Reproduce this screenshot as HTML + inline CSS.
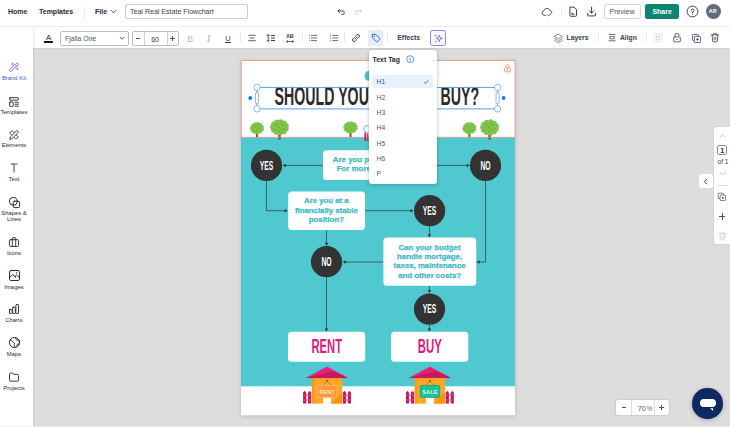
<!DOCTYPE html>
<html><head><meta charset="utf-8">
<style>
*{box-sizing:border-box;margin:0;padding:0}
html,body{width:730px;height:427px;overflow:hidden;background:#dddddd;font-family:"Liberation Sans",sans-serif;color:#1f2937}
.abs{position:absolute}
#top{position:absolute;left:0;top:0;width:730px;height:27px;background:#fff;border-bottom:1px solid #eceef1;z-index:3}
#tool{position:absolute;left:33px;top:26px;width:697px;height:22.1px;background:#fff;box-shadow:0 .5px 1.2px rgba(0,0,0,.07)}
#side{position:absolute;left:0;top:26px;width:33px;height:401px;background:#fff;box-shadow:1px 0 1.5px rgba(0,0,0,.10)}
.t{position:absolute;white-space:nowrap;line-height:1}
.b{font-weight:bold}
.vd{position:absolute;width:1px;background:#e1e4e8}
.si{position:absolute;left:-6px;width:40px;text-align:center;font-size:5.9px;line-height:6.5px;color:#2b3440}
svg{position:absolute;overflow:visible}
#tool>svg{margin-top:.9px}
</style></head><body>
<!-- CANVAS -->
<div id="canvas">
<svg style="left:0;top:0" width="730" height="427" viewBox="0 0 730 427">
<defs><filter id="ps" x="-5%" y="-5%" width="110%" height="110%"><feDropShadow dx="0" dy="1.2" stdDeviation="2.2" flood-color="#000" flood-opacity=".17"/></filter><clipPath id="pc"><rect x="241" y="60" width="274" height="355.1"/></clipPath></defs>
<rect x="241" y="60" width="274" height="355.1" fill="#fff" filter="url(#ps)"/>
<g clip-path="url(#pc)">
<rect x="241" y="137.3" width="274" height="249" fill="#4fc8d0"/>
<path d="M256.15 131.20 H257.85 L258.06 137.40 H255.94 Z" fill="#87543f"/><ellipse cx="257.00" cy="128.20" rx="5.82" ry="4.92" fill="#80c44b"/><circle cx="261.88" cy="129.44" r="1.98" fill="#80c44b"/><circle cx="260.29" cy="131.41" r="1.98" fill="#80c44b"/><circle cx="257.65" cy="132.37" r="1.98" fill="#80c44b"/><circle cx="254.81" cy="131.99" r="1.98" fill="#80c44b"/><circle cx="252.66" cy="130.42" r="1.98" fill="#80c44b"/><circle cx="251.89" cy="128.14" r="1.98" fill="#80c44b"/><circle cx="252.74" cy="125.88" r="1.98" fill="#80c44b"/><circle cx="254.94" cy="124.35" r="1.98" fill="#80c44b"/><circle cx="257.80" cy="124.05" r="1.98" fill="#80c44b"/><circle cx="260.40" cy="125.07" r="1.98" fill="#80c44b"/><circle cx="261.93" cy="127.07" r="1.98" fill="#80c44b"/><path d="M253.75 126.74 L255.28 125.46" stroke="#5fa83a" stroke-width="0.64" stroke-linecap="round"/><path d="M258.37 125.16 L259.89 126.44" stroke="#5fa83a" stroke-width="0.64" stroke-linecap="round"/><path d="M255.88 127.56 L257.41 128.84" stroke="#5fa83a" stroke-width="0.64" stroke-linecap="round"/><path d="M253.04 129.66 L254.57 130.94" stroke="#5fa83a" stroke-width="0.64" stroke-linecap="round"/><path d="M259.08 130.64 L260.60 129.36" stroke="#5fa83a" stroke-width="0.64" stroke-linecap="round"/><path d="M256.24 131.84 L257.76 130.56" stroke="#5fa83a" stroke-width="0.64" stroke-linecap="round"/>
<path d="M278.35 131.15 H280.65 L280.94 139.60 H278.06 Z" fill="#87543f"/><ellipse cx="279.50" cy="127.20" rx="7.87" ry="6.48" fill="#80c44b"/><circle cx="286.10" cy="128.83" r="2.61" fill="#80c44b"/><circle cx="283.95" cy="131.43" r="2.61" fill="#80c44b"/><circle cx="280.39" cy="132.68" r="2.61" fill="#80c44b"/><circle cx="276.54" cy="132.20" r="2.61" fill="#80c44b"/><circle cx="273.63" cy="130.12" r="2.61" fill="#80c44b"/><circle cx="272.59" cy="127.12" r="2.61" fill="#80c44b"/><circle cx="273.74" cy="124.14" r="2.61" fill="#80c44b"/><circle cx="276.72" cy="122.14" r="2.61" fill="#80c44b"/><circle cx="280.58" cy="121.74" r="2.61" fill="#80c44b"/><circle cx="284.10" cy="123.07" r="2.61" fill="#80c44b"/><circle cx="286.16" cy="125.72" r="2.61" fill="#80c44b"/><path d="M275.11 125.30 L277.17 123.57" stroke="#5fa83a" stroke-width="0.86" stroke-linecap="round"/><path d="M281.35 123.18 L283.41 124.90" stroke="#5fa83a" stroke-width="0.86" stroke-linecap="round"/><path d="M277.99 126.34 L280.05 128.06" stroke="#5fa83a" stroke-width="0.86" stroke-linecap="round"/><path d="M274.15 129.10 L276.21 130.83" stroke="#5fa83a" stroke-width="0.86" stroke-linecap="round"/><path d="M282.31 130.43 L284.37 128.71" stroke="#5fa83a" stroke-width="0.86" stroke-linecap="round"/><path d="M278.47 132.01 L280.53 130.29" stroke="#5fa83a" stroke-width="0.86" stroke-linecap="round"/>
<path d="M349.62 130.55 H351.38 L351.60 137.40 H349.40 Z" fill="#87543f"/><ellipse cx="350.50" cy="127.50" rx="5.99" ry="5.00" fill="#80c44b"/><circle cx="355.52" cy="128.76" r="2.01" fill="#80c44b"/><circle cx="353.88" cy="130.77" r="2.01" fill="#80c44b"/><circle cx="351.17" cy="131.73" r="2.01" fill="#80c44b"/><circle cx="348.25" cy="131.36" r="2.01" fill="#80c44b"/><circle cx="346.04" cy="129.76" r="2.01" fill="#80c44b"/><circle cx="345.24" cy="127.44" r="2.01" fill="#80c44b"/><circle cx="346.12" cy="125.14" r="2.01" fill="#80c44b"/><circle cx="348.39" cy="123.59" r="2.01" fill="#80c44b"/><circle cx="351.32" cy="123.28" r="2.01" fill="#80c44b"/><circle cx="354.00" cy="124.31" r="2.01" fill="#80c44b"/><circle cx="355.56" cy="126.36" r="2.01" fill="#80c44b"/><path d="M347.16 126.02 L348.73 124.71" stroke="#5fa83a" stroke-width="0.66" stroke-linecap="round"/><path d="M351.91 124.40 L353.47 125.72" stroke="#5fa83a" stroke-width="0.66" stroke-linecap="round"/><path d="M349.35 126.84 L350.92 128.16" stroke="#5fa83a" stroke-width="0.66" stroke-linecap="round"/><path d="M346.43 128.98 L348.00 130.29" stroke="#5fa83a" stroke-width="0.66" stroke-linecap="round"/><path d="M352.64 129.99 L354.20 128.67" stroke="#5fa83a" stroke-width="0.66" stroke-linecap="round"/><path d="M349.72 131.21 L351.28 129.89" stroke="#5fa83a" stroke-width="0.66" stroke-linecap="round"/>
<path d="M468.55 131.20 H470.25 L470.46 137.40 H468.33 Z" fill="#87543f"/><ellipse cx="469.40" cy="128.20" rx="5.82" ry="4.92" fill="#80c44b"/><circle cx="474.28" cy="129.44" r="1.98" fill="#80c44b"/><circle cx="472.69" cy="131.41" r="1.98" fill="#80c44b"/><circle cx="470.05" cy="132.37" r="1.98" fill="#80c44b"/><circle cx="467.21" cy="131.99" r="1.98" fill="#80c44b"/><circle cx="465.06" cy="130.42" r="1.98" fill="#80c44b"/><circle cx="464.29" cy="128.14" r="1.98" fill="#80c44b"/><circle cx="465.14" cy="125.88" r="1.98" fill="#80c44b"/><circle cx="467.34" cy="124.35" r="1.98" fill="#80c44b"/><circle cx="470.20" cy="124.05" r="1.98" fill="#80c44b"/><circle cx="472.80" cy="125.07" r="1.98" fill="#80c44b"/><circle cx="474.33" cy="127.07" r="1.98" fill="#80c44b"/><path d="M466.15 126.74 L467.68 125.46" stroke="#5fa83a" stroke-width="0.64" stroke-linecap="round"/><path d="M470.77 125.16 L472.29 126.44" stroke="#5fa83a" stroke-width="0.64" stroke-linecap="round"/><path d="M468.28 127.56 L469.81 128.84" stroke="#5fa83a" stroke-width="0.64" stroke-linecap="round"/><path d="M465.44 129.66 L466.97 130.94" stroke="#5fa83a" stroke-width="0.64" stroke-linecap="round"/><path d="M471.48 130.64 L473.00 129.36" stroke="#5fa83a" stroke-width="0.64" stroke-linecap="round"/><path d="M468.64 131.84 L470.16 130.56" stroke="#5fa83a" stroke-width="0.64" stroke-linecap="round"/>
<path d="M488.45 131.35 H490.75 L491.04 139.40 H488.16 Z" fill="#87543f"/><ellipse cx="489.60" cy="127.40" rx="7.87" ry="6.48" fill="#80c44b"/><circle cx="496.20" cy="129.03" r="2.61" fill="#80c44b"/><circle cx="494.05" cy="131.63" r="2.61" fill="#80c44b"/><circle cx="490.49" cy="132.88" r="2.61" fill="#80c44b"/><circle cx="486.64" cy="132.40" r="2.61" fill="#80c44b"/><circle cx="483.73" cy="130.32" r="2.61" fill="#80c44b"/><circle cx="482.69" cy="127.32" r="2.61" fill="#80c44b"/><circle cx="483.84" cy="124.34" r="2.61" fill="#80c44b"/><circle cx="486.82" cy="122.34" r="2.61" fill="#80c44b"/><circle cx="490.68" cy="121.94" r="2.61" fill="#80c44b"/><circle cx="494.20" cy="123.27" r="2.61" fill="#80c44b"/><circle cx="496.26" cy="125.92" r="2.61" fill="#80c44b"/><path d="M485.21 125.50 L487.27 123.77" stroke="#5fa83a" stroke-width="0.86" stroke-linecap="round"/><path d="M491.45 123.38 L493.51 125.10" stroke="#5fa83a" stroke-width="0.86" stroke-linecap="round"/><path d="M488.09 126.54 L490.15 128.26" stroke="#5fa83a" stroke-width="0.86" stroke-linecap="round"/><path d="M484.25 129.30 L486.31 131.03" stroke="#5fa83a" stroke-width="0.86" stroke-linecap="round"/><path d="M492.41 130.63 L494.47 128.91" stroke="#5fa83a" stroke-width="0.86" stroke-linecap="round"/><path d="M488.57 132.21 L490.63 130.49" stroke="#5fa83a" stroke-width="0.86" stroke-linecap="round"/>
<rect x="364.6" y="70.8" width="32" height="10" rx="4.6" fill="#4fc4c9"/>
<g transform="translate(0,0.5)"><path d="M323 164.9 H284.6" stroke="#2f3a3c" stroke-width="0.7" fill="none"/><path d="M282.6 164.9 L285.8 163.1 V166.70000000000002 Z" fill="#2f3a3c"/></g>
<g transform="translate(0,0.5)"><path d="M433 164.9 H467.8" stroke="#2f3a3c" stroke-width="0.7" fill="none"/><path d="M469.8 164.9 L466.6 163.1 V166.70000000000002 Z" fill="#2f3a3c"/></g>
<g transform="translate(0,0.5)"><path d="M266.5 180 V210.2 H285.8" stroke="#2f3a3c" stroke-width="0.7" fill="none"/><path d="M287.8 210.2 L284.6 208.4 V212 Z" fill="#2f3a3c"/></g>
<g transform="translate(0,0.5)"><path d="M365 210.2 H411.6" stroke="#2f3a3c" stroke-width="0.7" fill="none"/><path d="M413.6 210.2 L410.40000000000003 208.39999999999998 V212.0 Z" fill="#2f3a3c"/></g>
<g transform="translate(0,0.5)"><path d="M429.4 225.6 V235" stroke="#2f3a3c" stroke-width="0.7" fill="none"/><path d="M429.4 237 L427.59999999999997 233.8 H431.2 Z" fill="#2f3a3c"/></g>
<g transform="translate(0,0.5)"><path d="M485.5 180 V261.5 H478.6" stroke="#2f3a3c" stroke-width="0.7" fill="none"/><path d="M476.4 261.5 L479.6 259.7 V263.3 Z" fill="#2f3a3c"/></g>
<g transform="translate(0,0.5)"><path d="M383.4 261.5 H344.6" stroke="#2f3a3c" stroke-width="0.7" fill="none"/><path d="M342.6 261.5 L345.8 259.7 V263.3 Z" fill="#2f3a3c"/></g>
<g transform="translate(0,0.5)"><path d="M326.5 230 V243.4" stroke="#2f3a3c" stroke-width="0.7" fill="none"/><path d="M326.5 245.4 L324.7 242.20000000000002 H328.3 Z" fill="#2f3a3c"/></g>
<g transform="translate(0,0.5)"><path d="M326.5 276.6 V329.2" stroke="#2f3a3c" stroke-width="0.7" fill="none"/><path d="M326.5 331.2 L324.7 328 H328.3 Z" fill="#2f3a3c"/></g>
<g transform="translate(0,0.5)"><path d="M429.4 285.6 V290.6" stroke="#2f3a3c" stroke-width="0.7" fill="none"/><path d="M429.4 292.6 L427.59999999999997 289.40000000000003 H431.2 Z" fill="#2f3a3c"/></g>
<g transform="translate(0,0.5)"><path d="M429.4 324 V329.2" stroke="#2f3a3c" stroke-width="0.7" fill="none"/><path d="M429.4 331.2 L427.59999999999997 328 H431.2 Z" fill="#2f3a3c"/></g>
<rect x="323" y="150.2" width="110" height="29.7" rx="3.5" fill="#fff"/>
<text x="332.8" y="161.9" text-anchor="start" font-size="7.9" font-weight="bold" fill="#40b8c3" stroke="#40b8c3" stroke-width="0.25">Are you planning to stay</text><text x="336.7" y="171.4" text-anchor="start" font-size="7.9" font-weight="bold" fill="#40b8c3" stroke="#40b8c3" stroke-width="0.25">For more than 5 years?</text>
<rect x="288.2" y="191.5" width="76.8" height="38.6" rx="3.5" fill="#fff"/>
<text x="326.4" y="203.0" text-anchor="middle" font-size="7.8" font-weight="bold" fill="#40b8c3" stroke="#40b8c3" stroke-width="0.25">Are you at a</text><text x="326.4" y="212.5" text-anchor="middle" font-size="7.8" font-weight="bold" fill="#40b8c3" stroke="#40b8c3" stroke-width="0.25">financially stable</text><text x="326.4" y="222.3" text-anchor="middle" font-size="7.8" font-weight="bold" fill="#40b8c3" stroke="#40b8c3" stroke-width="0.25">position?</text>
<rect x="383.4" y="237.4" width="92.8" height="48.3" rx="3.5" fill="#fff"/>
<text x="429.6" y="249.5" text-anchor="middle" font-size="7.8" font-weight="bold" fill="#40b8c3" stroke="#40b8c3" stroke-width="0.25">Can your budget</text><text x="429.6" y="258.9" text-anchor="middle" font-size="7.8" font-weight="bold" fill="#40b8c3" stroke="#40b8c3" stroke-width="0.25">handle mortgage,</text><text x="429.6" y="268.4" text-anchor="middle" font-size="7.8" font-weight="bold" fill="#40b8c3" stroke="#40b8c3" stroke-width="0.25">taxes, maintenance</text><text x="429.6" y="277.9" text-anchor="middle" font-size="7.8" font-weight="bold" fill="#40b8c3" stroke="#40b8c3" stroke-width="0.25">and other costs?</text>
<g transform="translate(0,0.5)"><circle cx="266.5" cy="164.9" r="15.6" fill="#333333"/><text x="266.5" y="169.1" text-anchor="middle" font-size="12.3" font-weight="bold" fill="#fff" textLength="13.6" lengthAdjust="spacingAndGlyphs">YES</text></g>
<g transform="translate(0,0.5)"><circle cx="485.5" cy="164.9" r="15.6" fill="#333333"/><text x="485.5" y="169.1" text-anchor="middle" font-size="12.3" font-weight="bold" fill="#fff" textLength="10.2" lengthAdjust="spacingAndGlyphs">NO</text></g>
<g transform="translate(0,0.5)"><circle cx="429.6" cy="210.2" r="15.6" fill="#333333"/><text x="429.6" y="214.39999999999998" text-anchor="middle" font-size="12.3" font-weight="bold" fill="#fff" textLength="13.6" lengthAdjust="spacingAndGlyphs">YES</text></g>
<g transform="translate(0,0.5)"><circle cx="326.5" cy="261.2" r="15.6" fill="#333333"/><text x="326.5" y="265.4" text-anchor="middle" font-size="12.3" font-weight="bold" fill="#fff" textLength="10.2" lengthAdjust="spacingAndGlyphs">NO</text></g>
<g transform="translate(0,0.5)"><circle cx="429.5" cy="308.6" r="15.6" fill="#333333"/><text x="429.5" y="312.8" text-anchor="middle" font-size="12.3" font-weight="bold" fill="#fff" textLength="13.6" lengthAdjust="spacingAndGlyphs">YES</text></g>
<rect x="288" y="331.7" width="77.2" height="30.1" rx="3.5" fill="#fff"/>
<text x="326.8" y="352.8" text-anchor="middle" font-size="20.2" font-weight="bold" fill="#d6247c" textLength="30.6" lengthAdjust="spacingAndGlyphs">RENT</text>
<rect x="391" y="331.7" width="77.3" height="30.1" rx="3.5" fill="#fff"/>
<text x="429.8" y="352.8" text-anchor="middle" font-size="20.2" font-weight="bold" fill="#d6247c" textLength="24" lengthAdjust="spacingAndGlyphs">BUY</text>
<path d="M303.05 403.6 V392.8 L304.65 390.8 L306.25 392.8 V403.6 Z" fill="#c2185b"/><path d="M308.05 403.6 V392.8 L309.65 390.8 L311.25 392.8 V403.6 Z" fill="#c2185b"/><path d="M342.85 403.6 V392.8 L344.45 390.8 L346.05 392.8 V403.6 Z" fill="#c2185b"/><path d="M347.85 403.6 V392.8 L349.45 390.8 L351.05 392.8 V403.6 Z" fill="#c2185b"/><rect x="303.15" y="394.6" width="8" height="1.2" fill="#d84a82"/><rect x="303.15" y="399.4" width="8" height="1.2" fill="#d84a82"/><rect x="342.95" y="394.6" width="8" height="1.2" fill="#d84a82"/><rect x="342.95" y="399.4" width="8" height="1.2" fill="#d84a82"/><rect x="311.85" y="377" width="30.4" height="26.6" fill="#ffa826"/><path d="M311.85 377 L314.65 377 L314.65 403.6 H311.85 Z" fill="#f79a1a"/><path d="M342.25 392 V403.6 H331.05 Z" fill="#f5950f"/><rect x="323.05" y="397.2" width="8" height="6.6" fill="#fff"/><path d="M306.65 377.8 L327.05 366.9 L347.45 377.8 Z" fill="#ea1e79" stroke="#ea1e79" stroke-width="0.6" stroke-linejoin="round"/><path d="M306.65 377.8 L333.05 371.2 L347.45 377.8 Z" fill="#c4185f"/><path d="M320.65 387.6 L327.05 381 L333.45 387.6" stroke="#6d5a4f" stroke-width="0.5" fill="none"/><circle cx="327.05" cy="381" r="0.9" fill="#d81b60"/><rect x="317.25" y="385.4" width="19.6" height="12" rx="0.8" fill="#ff9838" stroke="#ffbf73" stroke-width="0.8"/><text x="327.05" y="393.6" text-anchor="middle" font-size="5.2" font-weight="bold" fill="#ffe9c9" textLength="15" lengthAdjust="spacing">RENT</text>
<path d="M405.90 403.6 V392.8 L407.50 390.8 L409.10 392.8 V403.6 Z" fill="#c2185b"/><path d="M410.90 403.6 V392.8 L412.50 390.8 L414.10 392.8 V403.6 Z" fill="#c2185b"/><path d="M445.70 403.6 V392.8 L447.30 390.8 L448.90 392.8 V403.6 Z" fill="#c2185b"/><path d="M450.70 403.6 V392.8 L452.30 390.8 L453.90 392.8 V403.6 Z" fill="#c2185b"/><rect x="406.00" y="394.6" width="8" height="1.2" fill="#d84a82"/><rect x="406.00" y="399.4" width="8" height="1.2" fill="#d84a82"/><rect x="445.80" y="394.6" width="8" height="1.2" fill="#d84a82"/><rect x="445.80" y="399.4" width="8" height="1.2" fill="#d84a82"/><rect x="414.70" y="377" width="30.4" height="26.6" fill="#ffa826"/><path d="M414.70 377 L417.50 377 L417.50 403.6 H414.70 Z" fill="#f79a1a"/><path d="M445.10 392 V403.6 H433.90 Z" fill="#f5950f"/><rect x="425.90" y="397.2" width="8" height="6.6" fill="#fff"/><path d="M409.50 377.8 L429.90 366.9 L450.30 377.8 Z" fill="#ea1e79" stroke="#ea1e79" stroke-width="0.6" stroke-linejoin="round"/><path d="M409.50 377.8 L435.90 371.2 L450.30 377.8 Z" fill="#c4185f"/><path d="M423.50 387.6 L429.90 381 L436.30 387.6" stroke="#6d5a4f" stroke-width="0.5" fill="none"/><circle cx="429.90" cy="381" r="0.9" fill="#d81b60"/><rect x="420.10" y="385.4" width="19.6" height="12" rx="0.8" fill="#1fbf98" stroke="#12a381" stroke-width="0.8"/><text x="429.90" y="393.6" text-anchor="middle" font-size="5.2" font-weight="bold" fill="#d9fff3" textLength="15" lengthAdjust="spacing">SALE</text>
</g>
<rect x="241.3" y="60.5" width="273.8" height="76.8" fill="none" stroke="#e39c8a" stroke-width="0.9"/>
<circle cx="507.5" cy="68" r="5.9" fill="#fff" stroke="#e4e4e4" stroke-width="0.6"/>
<rect x="504.6" y="67.9" width="5.8" height="3.9" rx="0.7" fill="none" stroke="#e2856c" stroke-width="0.8"/><path d="M505.8 67.8 V66.4 A1.7 1.7 0 0 1 509.2 66.4 V67.8 M507.5 68.8 V70.8" fill="none" stroke="#e2856c" stroke-width="0.8"/>
<text x="274.6" y="105.1" font-size="24.9" font-weight="bold" fill="#2e2a29" textLength="204.6" lengthAdjust="spacingAndGlyphs">SHOULD YOU RENT OR BUY?</text>
<rect x="257" y="87.4" width="240.6" height="21.5" fill="none" stroke="#5b9be8" stroke-width="1"/>
<circle cx="257" cy="87.4" r="3.2" fill="#fff" stroke="#5b9be8" stroke-width="0.7"/>
<circle cx="257" cy="108.9" r="3.2" fill="#fff" stroke="#5b9be8" stroke-width="0.7"/>
<circle cx="497.6" cy="87.4" r="3.2" fill="#fff" stroke="#5b9be8" stroke-width="0.7"/>
<circle cx="497.6" cy="108.9" r="3.2" fill="#fff" stroke="#5b9be8" stroke-width="0.7"/>
<rect x="255.4" y="92.3" width="3.2" height="11.4" rx="1.6" fill="#fff" stroke="#5b9be8" stroke-width="0.7"/>
<rect x="496.0" y="92.3" width="3.2" height="11.4" rx="1.6" fill="#fff" stroke="#5b9be8" stroke-width="0.7"/>
<circle cx="250.3" cy="98" r="1.9" fill="#1a73e8"/><circle cx="503.6" cy="98" r="1.9" fill="#1a73e8"/>
<rect x="364.4" y="132.6" width="1.6" height="8.4" fill="#c2185b"/><rect x="366.8" y="133.4" width="1.6" height="7.6" fill="#d6336c"/><circle cx="367" cy="129" r="3.4" fill="#fff" stroke="#5b9be8" stroke-width="0.8"/>
</svg>
</div>
<!-- TOPBAR -->
<div id="top">
<div class="t b" style="left:8px;top:8px;font-size:7px">Home</div>
<div class="t b" style="left:39px;top:8px;font-size:7px">Templates</div>
<div class="vd" style="left:84px;top:6.5px;height:12.5px;background:#e8eaed"></div>
<div class="t b" style="left:95px;top:8px;font-size:7px">File</div>
<svg style="left:109.8px;top:9.2px" width="7" height="5.8" viewBox="0 0 6 5"><path d="M0.8 1 L3 3.3 L5.2 1" fill="none" stroke="#374151" stroke-width="0.8"/></svg>
<div class="abs" style="left:125px;top:4px;width:123.3px;height:15px;border:1px solid #c9cdd3;border-radius:2px"></div>
<div class="t" style="left:130px;top:8.4px;font-size:7.05px;color:#374151">Teal Real Estate Flowchart</div>
<!-- undo / redo -->
<svg style="left:337.1px;top:8.1px" width="8.6" height="8.6" viewBox="0 0 10 10"><path d="M3.1 1.4 L1.1 3.4 L3.1 5.4 M1.3 3.4 H6.4 A2.1 2.1 0 0 1 6.4 7.6 H5.2" fill="none" stroke="#1f2937" stroke-width="0.95" stroke-linecap="round" stroke-linejoin="round"/></svg>
<svg style="left:354px;top:8.1px" width="8.6" height="8.6" viewBox="0 0 10 10"><path d="M6.9 1.4 L8.9 3.4 L6.9 5.4 M8.7 3.4 H3.6 A2.1 2.1 0 0 0 3.6 7.6 H4.8" fill="none" stroke="#c3c7cd" stroke-width="0.95" stroke-linecap="round" stroke-linejoin="round"/></svg>
<!-- cloud -->
<svg style="left:541px;top:6px" width="12" height="12" viewBox="0 0 12 12"><path d="M4.6 9.3 H3.4 A2.35 2.35 0 0 1 3 4.65 A3.1 3.1 0 0 1 8.9 4.5 A2.3 2.3 0 0 1 10.9 6.5" fill="none" stroke="#374151" stroke-width="0.9" stroke-linecap="round"/><path d="M6.4 8.7 L7.6 9.9 L10.2 7.3" fill="none" stroke="#374151" stroke-width="0.85" stroke-linecap="round" stroke-linejoin="round"/></svg>
<div class="vd" style="left:561px;top:7.2px;height:8.8px;background:#e8eaed"></div>
<!-- file -->
<svg style="left:567.6px;top:5.9px" width="10.4" height="11.3" viewBox="0 0 11 12"><path d="M2 1.2 H6.5 L9 3.8 V10.2 A0.7 0.7 0 0 1 8.3 10.9 H2.7 A0.7 0.7 0 0 1 2 10.2 Z" fill="none" stroke="#1f2937" stroke-width="0.95" stroke-linejoin="round"/><path d="M4 8.8 V7 M5.5 8.8 V7.8 M7 8.8 H4" fill="none" stroke="#1f2937" stroke-width="0.8"/></svg>
<!-- download -->
<svg style="left:586.2px;top:6.2px" width="11.2" height="11.2" viewBox="0 0 12 12"><path d="M6 1.3 V7.5 M3.6 5.2 L6 7.6 L8.4 5.2 M1.8 8 V10 A0.6 0.6 0 0 0 2.4 10.6 H9.6 A0.6 0.6 0 0 0 10.2 10 V8" fill="none" stroke="#1f2937" stroke-width="0.95" stroke-linecap="round" stroke-linejoin="round"/></svg>
<div class="abs" style="left:603.5px;top:4px;width:37px;height:15px;border:1px solid #d2d5da;border-radius:2.5px"></div>
<div class="t" style="left:609.6px;top:8.3px;font-size:7px;color:#4b5563">Preview</div>
<div class="abs" style="left:645px;top:4px;width:34px;height:15px;background:#0e8472;border-radius:2.5px"></div>
<div class="t b" style="left:652.4px;top:8.3px;font-size:7px;color:#fff">Share</div>
<svg style="left:686px;top:5px" width="13" height="13" viewBox="0 0 13 13"><circle cx="6.5" cy="6.5" r="5.4" fill="none" stroke="#1f2937" stroke-width="0.85"/><path d="M5.1 5.3 A1.45 1.45 0 1 1 6.5 6.9 V7.6" fill="none" stroke="#1f2937" stroke-width="0.85" stroke-linecap="round"/><circle cx="6.5" cy="9.1" r="0.55" fill="#1f2937"/></svg>
<div class="abs" style="left:705.5px;top:3.8px;width:15.6px;height:15.6px;border-radius:50%;background:#5e6b7e"></div>
<div class="t b" style="left:708.7px;top:9.2px;font-size:5.5px;color:#fff;letter-spacing:.1px">AR</div>
</div>
<!-- TOOLBAR -->
<div id="tool">
<!-- coordinates inside are relative to left:33 top:26 -->
<div class="t" style="left:12.9px;top:7.8px;font-size:7.8px;color:#1f2937">A</div>
<div class="abs" style="left:11.1px;top:15.3px;width:8.8px;height:2px;border-radius:.5px;background:#151515"></div>
<div class="abs" style="left:27.2px;top:4.9px;width:68.4px;height:15.1px;border:1px solid #b9bec6;border-radius:2px"></div>
<div class="t" style="left:32px;top:9.6px;font-size:6.8px;color:#4b5563">Fjalla One</div>
<svg style="left:86px;top:9.6px" width="6" height="5" viewBox="0 0 6 5"><path d="M0.8 1 L3 3.3 L5.2 1" fill="none" stroke="#374151" stroke-width="0.85"/></svg>
<div class="abs" style="left:99px;top:4.9px;width:46.5px;height:15.1px;border:1px solid #b9bec6;border-radius:2px"></div>
<div class="vd" style="left:110.5px;top:4.9px;height:15.1px;background:#ccd0d6"></div>
<div class="vd" style="left:133.5px;top:4.9px;height:15.1px;background:#ccd0d6"></div>
<div class="abs" style="left:103.2px;top:12.1px;width:4.2px;height:0.75px;background:#4b5563"></div>
<div class="t" style="left:118.2px;top:9.5px;font-size:7px;color:#374151">60</div>
<div class="abs" style="left:137.3px;top:12.1px;width:5px;height:0.75px;background:#4b5563"></div>
<div class="abs" style="left:139.45px;top:9.95px;width:0.75px;height:5px;background:#4b5563"></div>
<div class="t" style="left:154.2px;top:8.9px;font-size:8.8px;color:#b3b8c0">B</div>
<div class="t" style="left:173.8px;top:8.1px;font-size:10.4px;color:#adb3bb;font-family:'Liberation Serif',serif;font-style:italic">I</div>
<div class="t" style="left:192.3px;top:8.7px;font-size:7.4px;color:#374151">U</div>
<div class="abs" style="left:192px;top:15.9px;width:6.4px;height:0.8px;background:#374151"></div>
<div class="vd" style="left:207px;top:6.4px;height:9.6px;background:#e6e8eb"></div>
<!-- align center -->
<svg style="left:214px;top:6px" width="10" height="10" viewBox="0 0 10 10"><path d="M1.2 2.3 H8.8 M2.6 5 H7.4 M1.2 7.7 H8.8" stroke="#374151" stroke-width="0.8" fill="none"/></svg>
<!-- line height -->
<svg style="left:233px;top:6px" width="10" height="10" viewBox="0 0 10 10"><path d="M2.2 1.6 V8.4 M0.9 2.9 L2.2 1.5 L3.5 2.9 M0.9 7.1 L2.2 8.5 L3.5 7.1" stroke="#1f2937" stroke-width="0.8" fill="none"/><path d="M5 2.5 H9 M5 5 H9 M5 7.5 H9" stroke="#1f2937" stroke-width="0.9" fill="none"/></svg>
<!-- AB spacing -->
<div class="t b" style="left:252.9px;top:8.2px;font-size:5.6px;color:#374151;letter-spacing:-.1px">AB</div>
<svg style="left:253px;top:12px" width="8" height="5" viewBox="0 0 8 5"><path d="M0.6 2.5 H7.4 M1.8 1.2 L0.5 2.5 L1.8 3.8 M6.2 1.2 L7.5 2.5 L6.2 3.8" stroke="#1f2937" stroke-width="0.7" fill="none"/></svg>
<div class="vd" style="left:269px;top:6.4px;height:9.6px;background:#e6e8eb"></div>
<!-- bullet list -->
<svg style="left:275px;top:6px" width="10" height="10" viewBox="0 0 10 10"><path d="M3 2.4 H9 M3 5 H9 M3 7.6 H9" stroke="#374151" stroke-width="0.75" fill="none"/><path d="M1 2.4 H1.8 M1 5 H1.8 M1 7.6 H1.8" stroke="#374151" stroke-width="0.75" fill="none"/></svg>
<!-- numbered list -->
<svg style="left:295.5px;top:6px" width="10" height="10" viewBox="0 0 10 10"><path d="M3.4 2.4 H9.2 M3.4 5 H9.2 M3.4 7.6 H9.2" stroke="#374151" stroke-width="0.75" fill="none"/><path d="M1.3 1.6 V3.2 M1.3 4.3 V5.7 M1.3 6.9 V8.4" stroke="#374151" stroke-width="0.6" fill="none"/></svg>
<div class="vd" style="left:311.3px;top:6.4px;height:9.6px;background:#e6e8eb"></div>
<!-- link -->
<svg style="left:318px;top:6px" width="10" height="10" viewBox="0 0 10 10"><path d="M4.4 3.3 L5.9 1.8 A1.65 1.65 0 0 1 8.2 4.1 L6.7 5.6 M5.6 6.7 L4.1 8.2 A1.65 1.65 0 0 1 1.8 5.9 L3.3 4.4 M3.9 6.1 L6.1 3.9" stroke="#1f2937" stroke-width="0.85" fill="none" stroke-linecap="round"/></svg>
<!-- tag active -->
<div class="abs" style="left:334.8px;top:4px;width:15.2px;height:15.5px;background:#e3eefb;border-radius:2.5px"></div>
<svg style="left:338.1px;top:5.9px" width="10" height="10" viewBox="0 0 10 10"><path d="M1.3 1.9 A0.6 0.6 0 0 1 1.9 1.3 H4.6 L8.6 5.3 A0.7 0.7 0 0 1 8.6 6.3 L6.3 8.6 A0.7 0.7 0 0 1 5.3 8.6 L1.3 4.6 Z" stroke="#1e4e8c" stroke-width="0.85" fill="none" stroke-linejoin="round"/><circle cx="3.2" cy="3.2" r="0.6" fill="#1e4e8c"/></svg>
<div class="vd" style="left:354px;top:6.4px;height:9.6px;background:#e6e8eb"></div>
<div class="t b" style="left:364.3px;top:9.4px;font-size:6.85px;color:#374151">Effects</div>
<!-- sparkle -->
<div class="abs" style="left:397px;top:4px;width:15.5px;height:15.5px;border:1px solid #7f8cf0;border-radius:2.5px;background:#fafaff"></div>
<svg style="left:399.5px;top:6.5px" width="11" height="11" viewBox="0 0 11 11"><path d="M6.2 2.2 L7 4.6 L9.4 5.4 L7 6.2 L6.2 8.6 L5.4 6.2 L3 5.4 L5.4 4.6 Z" fill="none" stroke="#5b54d6" stroke-width="0.75" stroke-linejoin="round"/><path d="M2.6 1.2 L3 2.2 L4 2.6 L3 3 L2.6 4 L2.2 3 L1.2 2.6 L2.2 2.2 Z" fill="#8a63e8"/><path d="M2.9 7.4 L3.2 8.1 L3.9 8.4 L3.2 8.7 L2.9 9.4 L2.6 8.7 L1.9 8.4 L2.6 8.1 Z" fill="#4a78ea"/></svg>
<!-- right group -->
<svg style="left:520px;top:6px" width="11" height="11" viewBox="0 0 11 11"><path d="M5.5 1.3 L9.6 3.5 L5.5 5.7 L1.4 3.5 Z M1.6 5.6 L5.5 7.7 L9.4 5.6 M1.6 7.6 L5.5 9.7 L9.4 7.6" fill="none" stroke="#4b5563" stroke-width="0.65" stroke-linejoin="round" stroke-linecap="round"/></svg>
<div class="t b" style="left:533.5px;top:9px;font-size:6.8px;color:#374151">Layers</div>
<div class="vd" style="left:564.5px;top:6.4px;height:9.6px;background:#e6e8eb"></div>
<svg style="left:573.8px;top:4.9px" width="10" height="11" viewBox="0 0 10 11"><path d="M1.6 2.4 H8.6 M1.6 8.8 H8.6" stroke="#374151" stroke-width="0.75" fill="none"/><rect x="3" y="4.3" width="4.2" height="2.6" fill="none" stroke="#374151" stroke-width="0.7"/></svg>
<div class="t b" style="left:587px;top:9.1px;font-size:6.7px;color:#374151">Align</div>
<div class="vd" style="left:613px;top:6.4px;height:9.6px;background:#e6e8eb"></div>
<!-- group (faded) -->
<svg style="left:620px;top:6px" width="10" height="10" viewBox="0 0 10 10"><rect x="1.2" y="1.2" width="7.6" height="7.6" fill="none" stroke="#c3c7cd" stroke-width="0.7" stroke-dasharray="1.2 0.8"/><rect x="3.2" y="3.2" width="3.6" height="3.6" fill="none" stroke="#c3c7cd" stroke-width="0.7"/></svg>
<!-- lock -->
<svg style="left:638.6px;top:5.5px" width="10" height="11" viewBox="0 0 10 11"><rect x="1.7" y="4.9" width="6.6" height="5" rx="0.8" fill="none" stroke="#374151" stroke-width="0.8"/><path d="M3 4.9 V3.3 A2 2 0 0 1 7 3.3 V3.8" fill="none" stroke="#374151" stroke-width="0.8" stroke-linecap="round"/><circle cx="5" cy="7.4" r="0.6" fill="#374151"/></svg>
<!-- copy -->
<svg style="left:657.5px;top:6px" width="11" height="11" viewBox="0 0 11 11"><rect x="3.3" y="3.3" width="6.3" height="6.3" rx="0.9" fill="none" stroke="#374151" stroke-width="0.8"/><path d="M7.4 3.2 V2.2 A0.8 0.8 0 0 0 6.6 1.4 H2.2 A0.8 0.8 0 0 0 1.4 2.2 V6.6 A0.8 0.8 0 0 0 2.2 7.4 H3.2" fill="none" stroke="#374151" stroke-width="0.8"/><path d="M6.45 5 V7.9 M5 6.45 H7.9" stroke="#374151" stroke-width="0.75"/></svg>
<!-- trash -->
<svg style="left:677px;top:5.5px" width="10" height="11" viewBox="0 0 10 11"><path d="M1.2 2.9 H8.8 M3.6 2.8 V1.9 A0.5 0.5 0 0 1 4.1 1.4 H5.9 A0.5 0.5 0 0 1 6.4 1.9 V2.8 M2.2 3 L2.6 9.2 A0.7 0.7 0 0 0 3.3 9.8 H6.7 A0.7 0.7 0 0 0 7.4 9.2 L7.8 3" fill="none" stroke="#374151" stroke-width="0.8" stroke-linecap="round"/><path d="M4.2 5 V8 M5.8 5 V8" stroke="#374151" stroke-width="0.7" stroke-linecap="round"/></svg>
</div>
<!-- SIDEBAR -->
<div id="side">
<svg style="left:7.9px;top:35.2px" width="12" height="12" viewBox="0 0 12 12"><defs><linearGradient id="gw" gradientUnits="userSpaceOnUse" x1="1.5" y1="10" x2="10" y2="2.4"><stop offset="0" stop-color="#2f6df2"/><stop offset="1" stop-color="#9a4fe6"/></linearGradient></defs><g transform="rotate(-41 5.85 6.2)"><rect x="0.4" y="5.05" width="10.9" height="2.3" rx="0.6" fill="none" stroke="url(#gw)" stroke-width="0.8"/><path d="M8.5 5.05 V7.35" stroke="url(#gw)" stroke-width="0.7"/></g><path d="M4.6 2 V3.8 M3.7 2.9 H5.5" stroke="#8a55ea" stroke-width="0.7" stroke-linecap="round"/><path d="M9.4 7 V8.6 M8.6 7.8 H10.2" stroke="#5a63ee" stroke-width="0.7" stroke-linecap="round"/></svg>
<div class="si" style="top:49.1px;color:#4560c6">Brand Kit</div>
<svg style="left:8.1px;top:70px" width="12" height="12" viewBox="0 0 12 12"><rect x="1.6" y="1.7" width="8.8" height="2.4" rx="0.5" stroke="#1f2937" fill="none" stroke-width="0.9" stroke-linecap="round" stroke-linejoin="round"/><rect x="1.6" y="6" width="3.6" height="4.4" rx="0.5" stroke="#1f2937" fill="none" stroke-width="0.9" stroke-linecap="round" stroke-linejoin="round"/><path d="M7 6.2 H10.4 M7 8.2 H10.4 M7 10.2 H10.4" stroke="#1f2937" fill="none" stroke-width="0.9" stroke-linecap="round" stroke-linejoin="round"/></svg>
<div class="si" style="top:83.1px;color:#1f2937">Templates</div>
<svg style="left:7.9px;top:102.7px" width="12" height="12" viewBox="0 0 12 12"><path d="M2 10 L2.4 7.9 L8.3 2 A0.9 0.9 0 0 1 9.6 2 L10 2.4 A0.9 0.9 0 0 1 10 3.7 L4.1 9.6 Z" stroke="#1f2937" fill="none" stroke-width="0.9" stroke-linecap="round" stroke-linejoin="round"/><path d="M2.1 3.6 L3.6 2.1 A0.6 0.6 0 0 1 4.4 2.1 L5.7 3.4 M8.6 6.3 L9.9 7.6 A0.6 0.6 0 0 1 9.9 8.4 L8.4 9.9 A0.6 0.6 0 0 1 7.6 9.9 L6.3 8.6 M2.1 3.6 A0.6 0.6 0 0 0 2.1 4.4 L3.4 5.7" stroke="#1f2937" fill="none" stroke-width="0.9" stroke-linecap="round" stroke-linejoin="round"/></svg>
<div class="si" style="top:116.3px;color:#1f2937">Elements</div>
<svg style="left:8.0px;top:136.2px" width="12" height="12" viewBox="0 0 12 12"><path d="M2.6 2 H9.4 M6 2 V10.4" stroke="#1f2937" stroke-width="0.85" fill="none"/></svg>
<div class="si" style="top:150.2px;color:#1f2937">Text</div>
<svg style="left:7.7px;top:169.5px" width="13" height="13" viewBox="0 0 12 12"><circle cx="4.9" cy="4.9" r="3.6" stroke="#1f2937" fill="none" stroke-width="0.9" stroke-linecap="round" stroke-linejoin="round"/><rect x="4.8" y="4.8" width="5.9" height="5.9" rx="1.2" stroke="#1f2937" fill="none" stroke-width="0.9" stroke-linecap="round" stroke-linejoin="round"/></svg>
<div class="si" style="top:183.5px;color:#1f2937">Shapes &amp;<br>Lines</div>
<svg style="left:7.9px;top:210.2px" width="12" height="12" viewBox="0 0 12 12"><rect x="1.4" y="3.7" width="9.2" height="6.8" rx="1" stroke="#1f2937" fill="none" stroke-width="0.9" stroke-linecap="round" stroke-linejoin="round"/><path d="M4.3 3.6 V2.4 A0.8 0.8 0 0 1 5.1 1.6 H6.9 A0.8 0.8 0 0 1 7.7 2.4 V3.6 M4.3 3.8 V10.4 M7.7 3.8 V10.4" stroke="#1f2937" fill="none" stroke-width="0.9" stroke-linecap="round" stroke-linejoin="round"/></svg>
<div class="si" style="top:223.8px;color:#1f2937">Icons</div>
<svg style="left:7.5px;top:243.0px" width="13" height="13" viewBox="0 0 12 12"><rect x="1.4" y="1.4" width="9.2" height="9.2" rx="1.3" stroke="#1f2937" fill="none" stroke-width="0.9" stroke-linecap="round" stroke-linejoin="round"/><path d="M1.6 7.6 L4.4 5.2 L7.2 7.8 M6.2 6.9 L7.8 5.6 L10.4 7.8" stroke="#1f2937" fill="none" stroke-width="0.9" stroke-linecap="round" stroke-linejoin="round"/><circle cx="7.9" cy="3.7" r="0.6" fill="#1f2937"/></svg>
<div class="si" style="top:257.7px;color:#1f2937">Images</div>
<svg style="left:8.0px;top:277.3px" width="12" height="12" viewBox="0 0 12 12"><rect x="1.5" y="6.5" width="2.6" height="4" rx="0.5" stroke="#1f2937" fill="none" stroke-width="0.9" stroke-linecap="round" stroke-linejoin="round"/><rect x="4.7" y="4.2" width="2.6" height="6.3" rx="0.5" stroke="#1f2937" fill="none" stroke-width="0.9" stroke-linecap="round" stroke-linejoin="round"/><rect x="7.9" y="1.5" width="2.6" height="9" rx="0.5" stroke="#1f2937" fill="none" stroke-width="0.9" stroke-linecap="round" stroke-linejoin="round"/></svg>
<div class="si" style="top:291.3px;color:#1f2937">Charts</div>
<svg style="left:7.5px;top:310.3px" width="13" height="13" viewBox="0 0 12 12"><circle cx="6" cy="6" r="4.7" stroke="#1f2937" fill="none" stroke-width="0.9" stroke-linecap="round" stroke-linejoin="round"/><path d="M2 3.8 C3.5 4 3.8 5.2 4.8 5.6 C5.8 6 6.2 7 5.8 8 C5.6 8.8 6.2 9.6 6.6 10.4 M7.2 1.6 C6.6 2.6 7.4 3.4 8.4 3.6 C9.2 3.8 9.6 4.6 10.4 4.6 M10.4 7.6 C9.6 7.2 8.6 7.4 8.2 8.2 C7.9 8.9 8.2 9.5 8.6 9.8" stroke="#1f2937" fill="none" stroke-width="0.9" stroke-linecap="round" stroke-linejoin="round" stroke-width="0.8"/></svg>
<div class="si" style="top:324.6px;color:#1f2937">Maps</div>
<svg style="left:8.0px;top:344.6px" width="12" height="12" viewBox="0 0 12 12"><path d="M1.5 3 A1 1 0 0 1 2.5 2 H4.6 L5.8 3.4 H9.5 A1 1 0 0 1 10.5 4.4 V9.2 A1 1 0 0 1 9.5 10.2 H2.5 A1 1 0 0 1 1.5 9.2 Z" stroke="#1f2937" fill="none" stroke-width="0.9" stroke-linecap="round" stroke-linejoin="round"/></svg>
<div class="si" style="top:358.6px;color:#1f2937">Projects</div>
</div>
<!-- OVERLAYS -->
<div id="over">
<div class="abs" style="left:0;top:425.6px;width:730px;height:1.4px;background:rgba(255,255,255,.25)"></div><div class="abs" style="left:0;top:425.6px;width:33px;height:1.4px;background:rgba(0,0,0,.05)"></div>
<div class="abs" style="left:368.8px;top:50px;width:68.2px;height:133.9px;background:#fff;border-radius:3px;box-shadow:0 1px 4px rgba(0,0,0,.22),0 0 1px rgba(0,0,0,.2)"></div>
<div class="t b" style="left:372.6px;top:57px;font-size:6.9px;color:#1f2937">Text Tag</div>
<svg style="left:405.6px;top:55.3px" width="8.4" height="8.4" viewBox="0 0 10 10"><circle cx="5" cy="5" r="4.2" fill="none" stroke="#2f7de1" stroke-width="0.9"/><path d="M5 4.4 V7.2" stroke="#2f7de1" stroke-width="0.9" stroke-linecap="round"/><circle cx="5" cy="2.9" r="0.55" fill="#2f7de1"/></svg>
<div class="abs" style="left:372.4px;top:75.2px;width:60.6px;height:12.6px;background:#e9f1fc;border-radius:2.5px"></div>
<div class="t" style="left:376.6px;top:79.1px;font-size:6.8px;color:#2457a6">H1</div>
<div class="t" style="left:376.6px;top:94.6px;font-size:6.8px;color:#4b5563">H2</div>
<div class="t" style="left:376.6px;top:109.9px;font-size:6.8px;color:#4b5563">H3</div>
<div class="t" style="left:376.6px;top:125.2px;font-size:6.8px;color:#4b5563">H4</div>
<div class="t" style="left:376.6px;top:140.6px;font-size:6.8px;color:#4b5563">H5</div>
<div class="t" style="left:376.6px;top:155.8px;font-size:6.8px;color:#4b5563">H6</div>
<div class="t" style="left:376.6px;top:171.1px;font-size:6.8px;color:#4b5563">P</div>
<svg style="left:423px;top:78.6px" width="6" height="6" viewBox="0 0 6 6"><path d="M1 3.2 L2.4 4.6 L5 1.6" fill="none" stroke="#2457a6" stroke-width="0.8" stroke-linecap="round" stroke-linejoin="round"/></svg>
<div class="abs" style="left:714.2px;top:127px;width:16px;height:116.5px;background:#fff;border-radius:3px 0 0 3px;box-shadow:0 0 2px rgba(0,0,0,.12)"></div>
<svg style="left:718.6px;top:132.7px" width="7" height="5" viewBox="0 0 7 5"><path d="M1 3.8 L3.5 1.3 L6 3.8" fill="none" stroke="#b4b9c1" stroke-width="0.8" stroke-linecap="round" stroke-linejoin="round"/></svg>
<div class="abs" style="left:717.3px;top:145.4px;width:9.9px;height:9.6px;border:0.7px solid #858b95;border-radius:1.8px"></div>
<div class="t b" style="left:720.3px;top:147.2px;font-size:7.2px;color:#1f2937">1</div>
<div class="t" style="left:717.6px;top:158.6px;font-size:6.5px;color:#374151">of 1</div>
<svg style="left:718.6px;top:170.7px" width="7" height="5" viewBox="0 0 7 5"><path d="M1 1.2 L3.5 3.7 L6 1.2" fill="none" stroke="#b4b9c1" stroke-width="0.8" stroke-linecap="round" stroke-linejoin="round"/></svg>
<div class="abs" style="left:717.3px;top:185.2px;width:10.4px;height:0.8px;background:#dfe2e6"></div>
<svg style="left:717.4px;top:192.2px" width="9.6" height="9.6" viewBox="0 0 11 11"><rect x="3.6" y="3.6" width="6.2" height="6.2" rx="0.9" fill="none" stroke="#374151" stroke-width="0.75"/><path d="M7.4 3.4 V2.2 A0.8 0.8 0 0 0 6.6 1.4 H2.2 A0.8 0.8 0 0 0 1.4 2.2 V6.6 A0.8 0.8 0 0 0 2.2 7.4 H3.4" fill="none" stroke="#374151" stroke-width="0.75"/><rect x="5.8" y="5.8" width="1.8" height="1.8" fill="#374151"/></svg>
<div class="abs" style="left:718.9px;top:216.2px;width:6.6px;height:0.65px;background:#4b5563"></div><div class="abs" style="left:721.9px;top:213.2px;width:0.65px;height:6.6px;background:#4b5563"></div>
<svg style="left:717.6px;top:231.3px" width="9" height="10" viewBox="0 0 10 11"><path d="M1.2 2.9 H8.8 M3.6 2.8 V1.9 A0.5 0.5 0 0 1 4.1 1.4 H5.9 A0.5 0.5 0 0 1 6.4 1.9 V2.8 M2.2 3 L2.6 9.2 A0.7 0.7 0 0 0 3.3 9.8 H6.7 A0.7 0.7 0 0 0 7.4 9.2 L7.8 3" fill="none" stroke="#c5c9cf" stroke-width="0.8" stroke-linecap="round"/><path d="M4.2 5 V8 M5.8 5 V8" stroke="#c5c9cf" stroke-width="0.7" stroke-linecap="round"/></svg>
<div class="abs" style="left:698.8px;top:174.3px;width:14.4px;height:13.5px;background:#fff;border-radius:2.5px"></div>
<svg style="left:703.3px;top:177.6px" width="5" height="7" viewBox="0 0 5 7"><path d="M3.8 1 L1.3 3.5 L3.8 6" fill="none" stroke="#1f2937" stroke-width="0.9" stroke-linecap="round" stroke-linejoin="round"/></svg>
<div class="abs" style="left:616px;top:400.2px;width:53px;height:14.6px;background:#fff;border-radius:2px;box-shadow:0 0 2px rgba(0,0,0,.25)"></div>
<div class="abs" style="left:631.4px;top:400.2px;width:0.8px;height:14.6px;background:#dcdfe3"></div><div class="abs" style="left:653.6px;top:400.2px;width:0.8px;height:14.6px;background:#dcdfe3"></div>
<div class="abs" style="left:621.8px;top:407.4px;width:4.2px;height:0.7px;background:#4b5563"></div>
<div class="t" style="left:637.8px;top:405px;font-size:7.2px;color:#4b5563">70<span style="color:#6b7280;font-size:6.8px;margin-left:.8px">%</span></div>
<div class="abs" style="left:659px;top:407.4px;width:5px;height:0.7px;background:#4b5563"></div><div class="abs" style="left:661.15px;top:405.25px;width:0.7px;height:5px;background:#4b5563"></div>
<div class="abs" style="left:692.4px;top:388.2px;width:30.4px;height:30.4px;border-radius:50%;background:#0f2a63;box-shadow:0 1px 4px rgba(0,0,0,.25)"></div>
<div class="abs" style="left:700.2px;top:399.2px;width:15.6px;height:7.6px;border-radius:3.8px;background:#fff"></div>
<svg style="left:709.6px;top:407.8px" width="3.4" height="3.4" viewBox="0 0 4 4"><path d="M0.2 0.2 H3.6 V3.6 Z" fill="#fff"/></svg>
</div>
</body></html>
